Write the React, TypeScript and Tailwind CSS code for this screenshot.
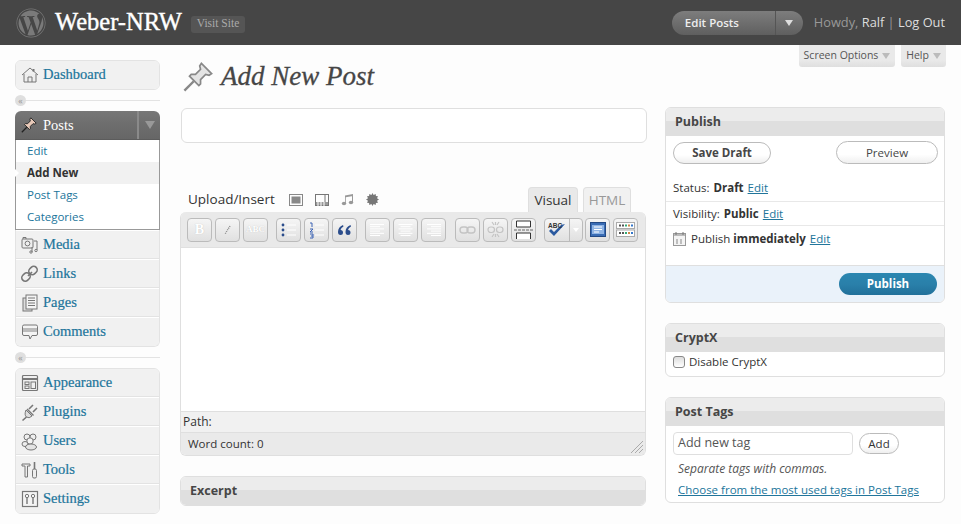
import React from 'react'
import { FaWordpress } from 'react-icons/fa'

const serif = "font-['Liberation_Serif']"

function Icon({ children, size = 20 }: { children: React.ReactNode; size?: number }) {
  return (
    <svg width={size} height={size} viewBox="0 0 20 20" fill="none" stroke="#777" strokeWidth="1" className="shrink-0">
      {children}
    </svg>
  )
}

const PinShape = ({ fill = '#d8d8d8', stroke = '#777' }: { fill?: string; stroke?: string }) => (
  <g stroke={stroke} fill={fill}>
    <path d="M12 2 L18 8 L16.5 9 L14.5 8.5 L11.5 11.5 L11.5 14 L10.5 15 L5 9.5 L6 8.5 L8.5 8.5 L11.5 5.5 L11 3.5 Z" />
    <path d="M7.5 12.5 L2 18" fill="none" strokeWidth="1.4" />
  </g>
)

const menuIcons: Record<string, React.ReactNode> = {
  Dashboard: (
    <Icon>
      <path d="M2 10 L10 3 L18 10" />
      <path d="M4 9 V17 H16 V9" fill="#eee" />
      <path d="M8 17 V12 H12 V17" />
      <path d="M13.5 4 V6.5" strokeWidth="2" />
    </Icon>
  ),
  Media: (
    <Icon>
      <rect x="2" y="4" width="11" height="9" rx="1" fill="#eee" />
      <circle cx="7.5" cy="8.5" r="2.4" />
      <path d="M3 4 V2.5 H6 V4" />
      <path d="M14 6 H17 V9 M17 9 V15 M12 12 V17" />
      <circle cx="11" cy="17" r="1.2" />
      <circle cx="16" cy="15.5" r="1.2" />
    </Icon>
  ),
  Links: (
    <Icon>
      <rect x="1.5" y="9.5" width="9" height="7" rx="3.5" transform="rotate(-45 6 13)" strokeWidth="1.6" />
      <rect x="8.5" y="3" width="9" height="7" rx="3.5" transform="rotate(-45 13 6.5)" strokeWidth="1.6" />
      <path d="M8 12 L12 8" strokeWidth="1.6" />
    </Icon>
  ),
  Pages: (
    <Icon>
      <rect x="3" y="5" width="9" height="13" fill="#ddd" />
      <rect x="6" y="2" width="11" height="14" fill="#f4f4f4" />
      <path d="M8 5 H15 M8 7.5 H15 M8 10 H15 M8 12.5 H15" />
    </Icon>
  ),
  Comments: (
    <Icon>
      <path d="M4 3 H16 Q17.5 3 17.5 4.5 V12 Q17.5 13.5 16 13.5 H12 L10 17 L9 13.5 H4 Q2.5 13.5 2.5 12 V4.5 Q2.5 3 4 3 Z" fill="#f4f4f4" />
      <rect x="3" y="6" width="14" height="4" fill="#bbb" stroke="none" />
    </Icon>
  ),
  Appearance: (
    <Icon>
      <rect x="2.5" y="2.5" width="15" height="15" rx="1" fill="#f0f0f0" strokeWidth="1.2" />
      <path d="M2.5 6 H17.5" strokeWidth="2" />
      <rect x="5" y="9" width="4" height="2.5" />
      <rect x="5" y="13" width="4" height="2.5" />
      <rect x="11" y="9" width="4.5" height="6.5" />
    </Icon>
  ),
  Plugins: (
    <Icon>
      <path d="M6 8 L12 14 Q9 17 6.5 15 Q4 13 6 8 Z" fill="#ddd" />
      <path d="M6.5 15 L2.5 18.5 M9 7 L13 3 M13 10 L17 6" strokeWidth="1.6" />
      <path d="M7 7 L13.5 13.5" strokeWidth="1.4" />
    </Icon>
  ),
  Users: (
    <Icon>
      <circle cx="7" cy="6" r="3" fill="#eee" />
      <circle cx="13" cy="6" r="3" fill="#eee" />
      <circle cx="10" cy="10" r="3.2" fill="#f4f4f4" />
      <ellipse cx="5" cy="13" rx="3" ry="2.5" fill="#eee" />
      <ellipse cx="11" cy="16" rx="5.5" ry="3" fill="#e4e4e4" />
    </Icon>
  ),
  Tools: (
    <Icon>
      <path d="M2 4 H10 V6 H7.5 V17 H5 V6 H2 Z" fill="#eee" />
      <rect x="12.5" y="9" width="4" height="9" rx="1.5" fill="#eee" />
      <path d="M14.5 2 V9" strokeWidth="1.6" />
    </Icon>
  ),
  Settings: (
    <Icon>
      <rect x="2.5" y="2.5" width="15" height="15" fill="#f4f4f4" strokeWidth="1.2" />
      <circle cx="7" cy="7" r="1.7" />
      <path d="M7 9 V15" strokeWidth="1.4" />
      <circle cx="13" cy="7" r="1.7" />
      <path d="M13 9 V15" strokeWidth="1.4" />
    </Icon>
  ),
}

function MenuRow({ label, last = false }: { label: string; last?: boolean }) {
  return (
    <div className={`flex h-[29px] items-center gap-[4px] pl-[4px] bg-[#f1f1f1] border-t border-t-white ${last ? '' : 'border-b border-b-[#e3e3e3]'}`}>
      <div className="w-[19px] flex justify-center">{menuIcons[label]}</div>
      <span className={`${serif} text-[14.5px] text-[#21759b] [-webkit-text-stroke:0.2px_#21759b]`}>{label}</span>
    </div>
  )
}

function MenuGroup({ items, className = '' }: { items: string[]; className?: string }) {
  return (
    <div className={`rounded-[6px] border border-[#e3e3e3] overflow-hidden ${className}`}>
      {items.map((l, i) => (
        <MenuRow key={l} label={l} last={i === items.length - 1} />
      ))}
    </div>
  )
}

function Separator() {
  return (
    <div className="relative h-[21px] flex items-center">
      <div className="h-px w-full bg-[#e3e3e3]" />
      <div className="absolute left-0 top-[5px] size-[11px] rounded-full bg-[#dfdfdf] flex items-center justify-center text-[9px] leading-none text-[#999]">«</div>
    </div>
  )
}

function Sidebar() {
  return (
    <div className="w-[145px] shrink-0 pt-[15px]">
      <MenuGroup items={['Dashboard']} className="h-[30px] [&>div:first-child]:-mt-px" />
      <Separator />
      <div className="rounded-t-[6px]">
        <div className="flex h-[29px] items-center bg-[linear-gradient(#777,#6d6d6d_50%,#666)] rounded-t-[6px] border-b border-[#5c5c5c]">
          <div className="w-[28px] pl-[5px] flex">
            <Icon size={18}>
              <PinShape fill="#e8c9b8" stroke="#222" />
            </Icon>
          </div>
          <span className={`${serif} text-[14.5px] text-white pt-[2px]`}>Posts</span>
          <div className="ml-auto w-[23px] h-full border-l-2 border-[#8a8a8a] flex items-center justify-center">
            <div className="w-0 h-0 border-x-[5px] border-x-transparent border-t-[8px] border-t-[#999]" />
          </div>
        </div>
        <div className="border-x border-b border-[#999] bg-white text-[11.5px] h-[90px] relative">
          <div className="h-[22px] flex items-center pl-[11px] text-[#21759b]">Edit</div>
          <div className="h-[22px] flex items-center pl-[11px] bg-[#f1f1f1] font-bold text-[#333]">Add New</div>
          <div className="h-[22px] flex items-center pl-[11px] text-[#21759b]">Post Tags</div>
          <div className="h-[22px] flex items-center pl-[11px] text-[#21759b]">Categories</div>
          <div className="absolute left-[-1px] top-[29px] w-0 h-0 border-y-[4px] border-y-transparent border-l-[4px] border-l-white" />
        </div>
      </div>
      <MenuGroup items={['Media', 'Links', 'Pages', 'Comments']} className="rounded-t-none border-t-0" />
      <Separator />
      <MenuGroup items={['Appearance', 'Plugins', 'Users', 'Tools', 'Settings']} className="[&>div:first-child]:-mt-px" />
    </div>
  )
}

function TinyLines({ align = 'left', color = '#d0d0d0' }: { align?: string; color?: string }) {
  const rows = [14, 10, 14, 10, 14, 10]
  return (
    <svg width="17" height="16" viewBox="0 0 17 16">
      {rows.map((w, i) => {
        const x = align === 'left' ? 1 : align === 'center' ? (17 - w) / 2 : 16 - w
        return <rect key={i} x={x} y={2 + i * 2.2} width={w} height="1" fill={color} />
      })}
    </svg>
  )
}

function ToolButton({ children, className = '' }: { children?: React.ReactNode; className?: string }) {
  return (
    <div className={`w-[25px] h-[24px] rounded-[4px] border border-[#bbb] bg-[linear-gradient(#f5f5f5,#e0e0e0)] flex items-center justify-center ${className}`}>
      {children}
    </div>
  )
}

function Toolbar() {
  return (
    <div className="h-[36px] flex items-center pl-[6px] bg-[#e9e9e9] border-b border-[#e0e0e0]">
      <div className="flex gap-[3px]">
        <ToolButton>
          <span className={`${serif} font-bold text-[14px] text-white [text-shadow:0_0_1px_#bbb]`}>B</span>
        </ToolButton>
        <ToolButton>
          <svg width="10" height="10" viewBox="0 0 10 10">
            <path d="M7 1 L2 9" stroke="#888" strokeWidth="1.4" strokeDasharray="1 1" />
          </svg>
        </ToolButton>
        <ToolButton>
          <span className={`${serif} font-bold text-[9px] text-white [text-shadow:0_0_1px_#bbb]`}>ABC</span>
        </ToolButton>
      </div>
      <div className="flex gap-[3px] ml-[8px]">
        <ToolButton>
          <svg width="17" height="18" viewBox="0 0 17 18">
            <g fill="#2b4d8c">
              <circle cx="3" cy="4" r="1.4" />
              <circle cx="3" cy="9" r="1.4" />
              <circle cx="3" cy="14" r="1.4" />
            </g>
            <path d="M7 4 H16 M7 9 H16 M7 14 H16" stroke="#fff" />
          </svg>
        </ToolButton>
        <ToolButton>
          <svg width="17" height="18" viewBox="0 0 17 18">
            <path d="M2 2 H4 V6 M2 8 H5 L2 11 H5 M2 13 H5 V17 H2 M3 15 H5" stroke="#3b62b5" fill="none" />
            <path d="M7 4 H16 M7 9 H16 M7 14 H16" stroke="#fff" />
          </svg>
        </ToolButton>
        <ToolButton>
          <svg width="15" height="12" viewBox="0 0 15 12">
            <path d="M6 1 Q1 3 1 8 Q1 11 3.5 11 Q6 11 6 8.5 Q6 6 3.5 6 Q4 3.5 6.5 2.5 Z M13.5 1 Q8.5 3 8.5 8 Q8.5 11 11 11 Q13.5 11 13.5 8.5 Q13.5 6 11 6 Q11.5 3.5 14 2.5 Z" fill="#2b4d8c" />
          </svg>
        </ToolButton>
      </div>
      <div className="flex gap-[3px] ml-[8px]">
        <ToolButton><TinyLines color="#fff" /></ToolButton>
        <ToolButton><TinyLines align="center" color="#fff" /></ToolButton>
        <ToolButton><TinyLines align="right" color="#fff" /></ToolButton>
      </div>
      <div className="flex gap-[3px] ml-[9px]">
        <ToolButton>
          <svg width="17" height="10" viewBox="0 0 17 10" fill="none" stroke="#c4c4c4" strokeWidth="1.4">
            <rect x="1" y="2" width="8" height="6" rx="3" />
            <rect x="8" y="2" width="8" height="6" rx="3" />
          </svg>
        </ToolButton>
        <ToolButton>
          <svg width="17" height="17" viewBox="0 0 17 17" fill="none" stroke="#c4c4c4" strokeWidth="1.2">
            <rect x="1" y="6" width="6.5" height="5.5" rx="2.7" />
            <rect x="9.5" y="6" width="6.5" height="5.5" rx="2.7" />
            <path d="M5 1 L7 4 M12 1 L10 4 M5 16 L7 13 M12 16 L10 13 M8.5 1 V4 M8.5 13 V16" />
          </svg>
        </ToolButton>
        <ToolButton>
          <svg width="19" height="20" viewBox="0 0 19 20" fill="none" stroke="#333">
            <path d="M2.5 1 H16.5 V7 H2.5 Z M2.5 19 V13 H16.5 V19" fill="#fff" />
            <path d="M0 10 H19" strokeDasharray="3 1" stroke="#666" />
          </svg>
        </ToolButton>
      </div>
      <div className="flex ml-[8px] w-[39px] h-[24px] rounded-[4px] border border-[#bbb] bg-[linear-gradient(#f5f5f5,#e0e0e0)]">
        <div className="w-[25px] border-r border-[#bbb] flex items-center justify-center">
          <svg width="20" height="18" viewBox="0 0 20 18">
            <path d="M2 10 L7 15 L18 3 L14 4 L7 11 L4 8 Z" fill="#2b5aa0" />
            <text x="1" y="7" fontSize="6.5" fontWeight="700" fontFamily="Liberation Sans" fill="#333">ABC</text>
          </svg>
        </div>
        <div className="flex-1 flex items-center justify-center">
          <div className="w-0 h-0 border-x-[3.5px] border-x-transparent border-t-[4px] border-t-white" />
        </div>
      </div>
      <div className="flex gap-[3px] ml-[2px]">
        <ToolButton>
          <svg width="16" height="15" viewBox="0 0 16 15">
            <rect x="0.5" y="0.5" width="15" height="14" fill="#3a6db5" stroke="#234a85" />
            <rect x="2" y="3" width="12" height="9" fill="#8fb4e4" />
            <path d="M4 5 H12 M4 7.5 H12 M4 10 H9" stroke="#fff" />
          </svg>
        </ToolButton>
        <ToolButton>
          <svg width="19" height="15" viewBox="0 0 19 15">
            <rect x="0.5" y="0.5" width="18" height="6" fill="#fff" stroke="#aaa" />
            <rect x="0.5" y="8" width="18" height="6.5" fill="#fff" stroke="#aaa" />
            <g fill="#555">
              <rect x="3" y="2.5" width="2" height="2" />
              <rect x="6" y="2.5" width="2" height="2" />
              <rect x="3" y="10" width="2" height="2" />
              <rect x="6" y="10" width="2" height="2" />
            </g>
            <g fill="#3a7">
              <rect x="9" y="2.5" width="2" height="2" />
              <rect x="9" y="10" width="2" height="2" />
            </g>
            <g fill="#c84">
              <rect x="12" y="2.5" width="2" height="2" />
              <rect x="12" y="10" width="2" height="2" />
            </g>
            <g fill="#37c">
              <rect x="15" y="2.5" width="2" height="2" />
              <rect x="15" y="10" width="2" height="2" />
            </g>
          </svg>
        </ToolButton>
      </div>
    </div>
  )
}

function Editor() {
  return (
    <div>
      <div className="flex items-end h-[25px] pl-[8px]">
        <div className="flex items-center h-[25px] text-[13.5px] text-[#333]">
          <span>Upload/Insert</span>
          <div className="flex items-center gap-[12px] ml-[14px]">
            <svg width="14" height="12" viewBox="0 0 14 12">
              <rect x="0.5" y="0.5" width="13" height="11" fill="none" stroke="#888" />
              <rect x="2.5" y="2.5" width="9" height="7" fill="#888" />
            </svg>
            <svg width="14" height="12" viewBox="0 0 14 12">
              <rect x="0.5" y="0.5" width="13" height="11" fill="none" stroke="#777" />
              <rect x="1" y="8" width="12" height="3" fill="#999" />
              <path d="M10 0 V8" stroke="#777" />
              <path d="M3 8 V12 M6 8 V12 M9 8 V12" stroke="#fff" />
            </svg>
            <svg width="13" height="13" viewBox="0 0 13 13" fill="#999">
              <path d="M4 2.5 L12 1 V3 L4.8 4.3 V10 H4 Z M11 3 H12 V9.5 H11 Z" />
              <ellipse cx="3" cy="10.5" rx="2.2" ry="1.7" />
              <ellipse cx="10" cy="9.5" rx="2.2" ry="1.7" />
            </svg>
            <svg width="13" height="13" viewBox="0 0 13 13" fill="#777">
              <path d="M6.5 0 L7.6 2 L9.7 1 L9.9 3.1 L12 3.3 L11 5.2 L13 6.5 L11 7.8 L12 9.7 L9.9 9.9 L9.7 12 L7.6 11 L6.5 13 L5.4 11 L3.3 12 L3.1 9.9 L1 9.7 L2 7.8 L0 6.5 L2 5.2 L1 3.3 L3.1 3.1 L3.3 1 L5.4 2 Z" />
            </svg>
          </div>
        </div>
        <div className="ml-auto flex gap-[5px] pr-[15px]">
          <div className="w-[50px] h-[25px] rounded-t-[4px] border border-b-0 border-[#dfdfdf] bg-[#e9e9e9] flex items-center justify-center text-[13.5px] text-[#333]">Visual</div>
          <div className="w-[48px] h-[25px] rounded-t-[4px] border border-b-0 border-[#dfdfdf] bg-[#f1f1f1] flex items-center justify-center text-[13.5px] text-[#999]">HTML</div>
        </div>
      </div>
      <div className="rounded-[6px] border border-[#dfdfdf] border-t-0 overflow-hidden">
        <Toolbar />
        <div className="h-[163px] bg-white" />
        <div className="h-[22px] bg-[#f1f1f1] border-y border-[#dfdfdf] flex items-center pl-[2px] text-[12px] text-[#333]">Path:</div>
        <div className="relative h-[22px] bg-[#eaeaea] flex items-center pl-[7px] text-[11.5px] text-[#333]">
          Word count: 0
          <svg width="14" height="14" viewBox="0 0 14 14" className="absolute right-[1px] bottom-[1px]" stroke="#aaa">
            <path d="M1 13 L13 1 M5 13 L13 5 M9 13 L13 9" />
          </svg>
        </div>
      </div>
    </div>
  )
}

function BoxHead({ title }: { title: string }) {
  return (
    <div className="h-[28px] bg-[linear-gradient(#ececec_0,#ececec_45%,#dfdfdf_45%,#dfdfdf_100%)] flex items-center pl-[9px] text-[12.5px] font-bold text-[#464646]">
      {title}
    </div>
  )
}

function Box({ title, children, className = '' }: { title: string; children: React.ReactNode; className?: string }) {
  return (
    <div className={`rounded-[6px] border border-[#dfdfdf] overflow-hidden bg-white ${className}`}>
      <BoxHead title={title} />
      {children}
    </div>
  )
}

const editLink = 'text-[#21759b] underline ml-[4px]'

function RightCol() {
  return (
    <div className="w-[280px] shrink-0 flex flex-col gap-[20px] pt-[62px]">
      <Box title="Publish">
        <div className="flex justify-between items-center pl-[7px] pr-[6px] pt-[5px]">
          <div className="w-[98px] h-[22px] rounded-full border border-[#bbb] bg-[linear-gradient(#fff,#fff_60%,#efefef)] flex items-center justify-center text-[11.5px] font-bold text-[#464646]">Save Draft</div>
          <div className="w-[102px] h-[23px] rounded-full border border-[#bbb] bg-[linear-gradient(#fff,#fff_60%,#efefef)] flex items-center justify-center text-[11.5px] text-[#464646]">Preview</div>
        </div>
        <div className="h-[38px] flex items-end pb-[5px] pl-[7px] border-b border-[#e8e8e8] text-[11.5px] text-[#333]">
          <span className="mr-[4px]">Status:</span>
          <b>Draft</b>
          <span className={editLink}>Edit</span>
        </div>
        <div className="h-[24px] flex items-center pl-[7px] border-b border-[#e8e8e8] text-[11.5px] text-[#333]">
          <span className="mr-[4px]">Visibility:</span>
          <b>Public</b>
          <span className={editLink}>Edit</span>
        </div>
        <div className="h-[39px] pt-[4px] flex items-start pl-[7px] text-[11.5px] text-[#333]">
          <svg width="13" height="14" viewBox="0 0 13 14" className="mr-[5px] mt-[2px]">
            <rect x="0.5" y="1.5" width="12" height="12" fill="#f4f4f4" stroke="#999" />
            <rect x="1" y="2" width="11" height="2" fill="#bbb" />
            <path d="M3 0 V3 M10 0 V3" stroke="#777" />
            <path d="M4 7 V12 M8 7 V12" stroke="#888" />
          </svg>
          <span>
            Publish <b>immediately</b>
          </span>
          <span className={editLink}>Edit</span>
        </div>
        <div className="h-[37px] border-t border-[#dfdfdf] bg-[#eaf2fa] flex items-center justify-end pr-[7px]">
          <div className="w-[98px] h-[22px] rounded-full bg-[linear-gradient(#2a86b0,#2a80aa_50%,#21709a)] flex items-center justify-center text-[11.5px] font-bold text-white">Publish</div>
        </div>
      </Box>
      <Box title="CryptX">
        <div className="h-[24px] flex items-start pt-[1px] pl-[7px] text-[11.5px] text-[#333]">
          <div className="size-[12px] rounded-[3px] border border-[#888] bg-[linear-gradient(#ddd,#fff)] mr-[4px] mt-[3px]" />
          Disable CryptX
        </div>
      </Box>
      <Box title="Post Tags">
        <div className="pl-[7px] pt-[6px] h-[76px]">
          <div className="flex items-center gap-[6px]">
            <div className="w-[180px] h-[23px] rounded-[4px] border border-[#dfdfdf] flex items-center pl-[4px] text-[12.5px] text-[#555]">Add new tag</div>
            <div className="w-[40px] h-[21px] rounded-full border border-[#bbb] bg-[linear-gradient(#fff,#fff_60%,#efefef)] flex items-center justify-center text-[11.5px] text-[#333]">Add</div>
          </div>
          <div className="mt-[5px] pl-[5px] text-[12px] italic text-[#555]">Separate tags with commas.</div>
          <div className="mt-[3px] pl-[5px] text-[11.5px] text-[#21759b] underline">Choose from the most used tags in Post Tags</div>
        </div>
      </Box>
    </div>
  )
}

export default function App() {
  return (
    <div className="w-[961px] h-[524px] overflow-hidden bg-[#fdfdfd] font-['Open_Sans',sans-serif]">
      <div className="h-[45px] bg-[#464646] flex items-center pl-[16px] pr-[16px]">
        <FaWordpress size={30} color="#7a7a7a" className="shrink-0" />
        <span className={`${serif} ml-[9px] text-[24.5px] text-white leading-none [-webkit-text-stroke:0.4px_#fff]`}>Weber-NRW</span>
        <div className={`${serif} ml-[9px] mt-[3px] px-[6px] h-[17px] flex items-center rounded-[3px] bg-[#555] text-[11.5px] text-[#aaa]`}>Visit Site</div>
        <div className="ml-auto flex items-center">
          <div className="w-[131px] h-[24px] rounded-full bg-[linear-gradient(#7d7d7d,#6e6e6e_50%,#5f5f5f)] flex items-center text-[11.5px] font-semibold text-[#eee]">
            <span className="pl-[13px]">Edit Posts</span>
            <div className="ml-auto w-[28px] h-full border-l border-[#555] flex items-center justify-center">
              <div className="w-0 h-0 border-x-[4px] border-x-transparent border-t-[6px] border-t-[#ddd]" />
            </div>
          </div>
          <div className="ml-[11px] text-[12.8px] text-[#999]">
            Howdy, <span className="text-[#ddd]">Ralf</span> | <span className="text-[#ddd]">Log Out</span>
          </div>
        </div>
      </div>
      <div className="flex pl-[15px]">
        <Sidebar />
        <div className="w-[466px] ml-[20px] shrink-0">
          <div className="flex items-center h-[46px] pt-[17px] pl-[1px]">
            <svg width="34" height="34" viewBox="0 0 20 20" fill="none" className="shrink-0">
              <PinShape fill="#e4e4e4" stroke="#888" />
            </svg>
            <span className={`${serif} ml-[6px] text-[27px] italic text-[#464646] [-webkit-text-stroke:0.3px_#464646]`}>Add New Post</span>
          </div>
          <div className="h-[35px] ml-[1px] mr-[-1px] mt-[17px] rounded-[6px] border border-[#dfdfdf] bg-white" />
          <div className="mt-[44px]">
            <Editor />
          </div>
          <div className="mt-[20px]">
            <div className="rounded-[6px] border border-[#dfdfdf] overflow-hidden">
              <BoxHead title="Excerpt" />
            </div>
          </div>
        </div>
        <div className="ml-[19px] flex flex-col relative">
          <RightCol />
          <div className="absolute top-0 right-[-1px] flex gap-[6px]">
            <div className="w-[96px] h-[22px] rounded-b-[3px] bg-[linear-gradient(#e9e9e9,#e9e9e9_70%,#dfdfdf)] flex items-center justify-center gap-[4px] text-[10.5px] text-[#555]">
              Screen Options
              <div className="w-0 h-0 border-x-[4px] border-x-transparent border-t-[6px] border-t-[#bbb]" />
            </div>
            <div className="w-[45px] h-[22px] rounded-b-[3px] bg-[linear-gradient(#e9e9e9,#e9e9e9_70%,#dfdfdf)] flex items-center justify-center gap-[4px] text-[10.5px] text-[#555]">
              Help
              <div className="w-0 h-0 border-x-[4px] border-x-transparent border-t-[6px] border-t-[#bbb]" />
            </div>
          </div>
        </div>
      </div>
    </div>
  )
}
